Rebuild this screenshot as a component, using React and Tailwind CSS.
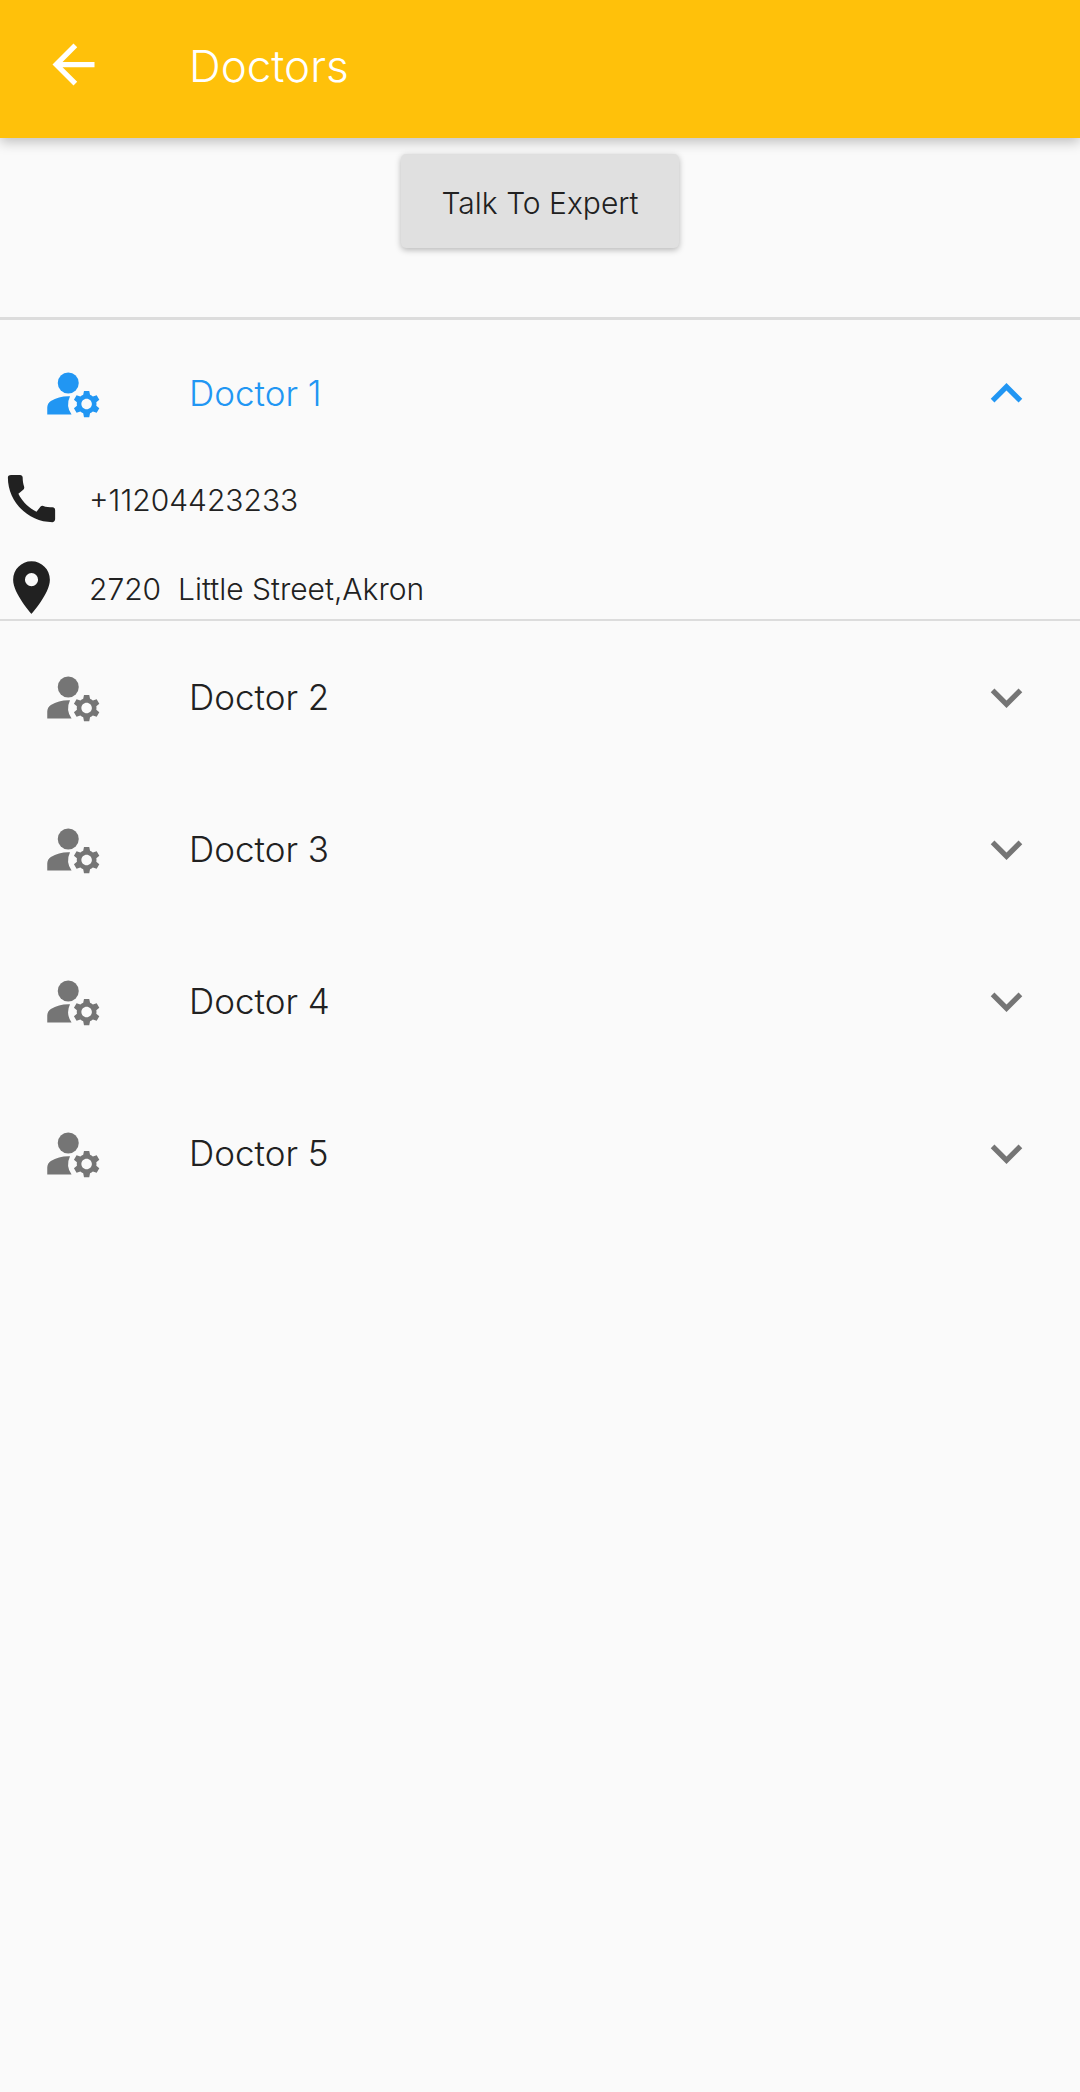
import { useState } from "react";
import {
  MdArrowBack,
  MdCall,
  MdExpandLess,
  MdExpandMore,
  MdLocationOn,
  MdManageAccounts,
} from "react-icons/md";

const doctors = [
  { id: 1, name: "Doctor 1", phone: "+11204423233", address: "2720  Little Street,Akron" },
  { id: 2, name: "Doctor 2" },
  { id: 3, name: "Doctor 3" },
  { id: 4, name: "Doctor 4" },
  { id: 5, name: "Doctor 5" },
];

function DoctorTile({ doctor, open, onToggle }) {
  const Chevron = open ? MdExpandLess : MdExpandMore;

  return (
    <li className={`border-t-[3px] border-b-2 ${open ? "border-[#dcdcdc]" : "border-transparent"}`}>
      <button
        type="button"
        aria-expanded={open}
        onClick={onToggle}
        className={`flex h-[147px] w-full items-center px-[42px] text-left ${open ? "text-[#2196f3]" : "text-[#757575]"}`}
      >
        <MdManageAccounts className="size-[63px] shrink-0" />
        <span className={`ml-[84px] flex-1 text-[35px] ${open ? "" : "text-[#212121]"}`}>
          {doctor.name}
        </span>
        <Chevron className="size-[63px] shrink-0" />
      </button>

      {open && doctor.phone && (
        <div className="flex flex-col gap-[26px]">
          <div className="flex items-center gap-[26px]">
            <MdCall className="size-[63px] shrink-0" />
            <a href={`tel:${doctor.phone}`} className="pt-1">
              {doctor.phone}
            </a>
          </div>
          <div className="flex items-center gap-[26px]">
            <MdLocationOn className="size-[63px] shrink-0" />
            <span className="pt-1 whitespace-pre">{doctor.address}</span>
          </div>
        </div>
      )}
    </li>
  );
}

export default function App() {
  const [openId, setOpenId] = useState(1);

  return (
    <div className="min-h-screen bg-[#fafafa] font-['Inter','Liberation_Sans',sans-serif] text-[30px] font-light text-[#212121]">
      <header className="relative flex h-[138px] items-center bg-[#ffc10a] px-[42px] pb-[9px] text-white shadow-[0_4px_12px_rgba(0,0,0,0.24)]">
        <button type="button" aria-label="Back">
          <MdArrowBack className="size-[63px]" />
        </button>
        <h1 className="ml-[84px] pt-0.5 text-[44px]">Doctors</h1>
      </header>

      <main>
        <div className="flex justify-center pt-4 pb-[69px]">
          <button
            type="button"
            className="h-[94px] rounded-[5px] bg-[#e0e0e0] px-10 pt-1 shadow-[0_2px_6px_rgba(0,0,0,0.28)]"
          >
            Talk To Expert
          </button>
        </div>

        <ul>
          {doctors.map((doctor) => (
            <DoctorTile
              key={doctor.id}
              doctor={doctor}
              open={openId === doctor.id}
              onToggle={() => setOpenId(openId === doctor.id ? null : doctor.id)}
            />
          ))}
        </ul>
      </main>
    </div>
  );
}
